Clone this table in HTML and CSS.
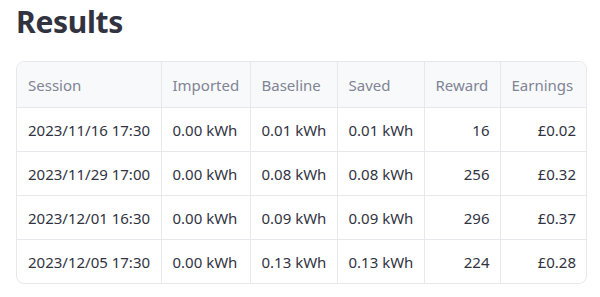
FILE: index.html
```html
<!DOCTYPE html>
<html>
<head>
<meta charset="utf-8">
<link rel="stylesheet" href="styles.css">
</head>
<body>
<main class="page">
  <h2 class="title">Results</h2>
  <div class="frame">
    <table class="grid">
      <colgroup>
        <col class="c-session"><col class="c-imp"><col class="c-base"><col class="c-saved"><col class="c-reward"><col class="c-earn">
      </colgroup>
      <thead>
        <tr><th>Session</th><th>Imported</th><th>Baseline</th><th>Saved</th><th>Reward</th><th>Earnings</th></tr>
      </thead>
      <tbody>
        <tr><td>2023/11/16 17:30</td><td>0.00 kWh</td><td>0.01 kWh</td><td>0.01 kWh</td><td class="num">16</td><td class="num">£0.02</td></tr>
        <tr><td>2023/11/29 17:00</td><td>0.00 kWh</td><td>0.08 kWh</td><td>0.08 kWh</td><td class="num">256</td><td class="num">£0.32</td></tr>
        <tr><td>2023/12/01 16:30</td><td>0.00 kWh</td><td>0.09 kWh</td><td>0.09 kWh</td><td class="num">296</td><td class="num">£0.37</td></tr>
        <tr><td>2023/12/05 17:30</td><td>0.00 kWh</td><td>0.13 kWh</td><td>0.13 kWh</td><td class="num">224</td><td class="num">£0.28</td></tr>
      </tbody>
    </table>
  </div>
</main>
</body>
</html>
```
FILE: styles.css
```css
html, body {
  margin: 0;
  padding: 0;
  background: #ffffff;
}
.page {
  padding: 0 13px 0 16px;
  font-family: "Noto Sans", "Open Sans", sans-serif;
  color: #31333f;
}
.title {
  margin: 0;
  padding: 0;
  height: 61px;
  box-sizing: border-box;
  font-size: 30px;
  line-height: 44px;
  font-weight: 700;
  letter-spacing: -0.3px;
  color: #31333f;
}
.frame {
  width: 571px;
  border: 1px solid #e6e8ec;
  border-radius: 8px;
  overflow: hidden;
  box-sizing: border-box;
}
.grid {
  border-collapse: collapse;
  table-layout: fixed;
  width: 100%;
  font-size: 15px;
}
.c-session { width: 144px; }
.c-imp { width: 89px; }
.c-base { width: 87px; }
.c-saved { width: 87px; }
.c-reward { width: 76px; }
.c-earn { width: auto; }
.grid th, .grid td {
  border-right: 1px solid #e6e8ec;
  border-bottom: 1px solid #e6e8ec;
  padding: 0 10px 0 11px;
  height: 43px;
  white-space: nowrap;
  text-align: left;
}
.grid th:last-child, .grid td:last-child { border-right: none; }
.grid tbody tr:last-child td { border-bottom: none; }
.grid th {
  background: #f8f9fb;
  color: #808495;
  font-weight: 400;
  height: 45px;
}
.grid td { color: #31333f; }
.grid td.num { text-align: right; }
```
